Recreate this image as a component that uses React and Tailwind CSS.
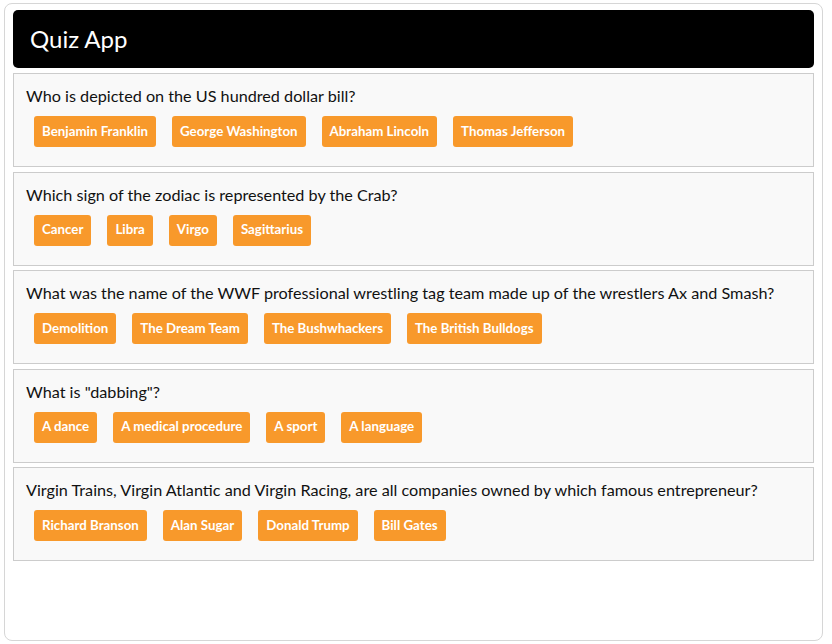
import React from "react";

const questions = [
  {
    q: "Who is depicted on the US hundred dollar bill?",
    a: ["Benjamin Franklin", "George Washington", "Abraham Lincoln", "Thomas Jefferson"],
  },
  {
    q: "Which sign of the zodiac is represented by the Crab?",
    a: ["Cancer", "Libra", "Virgo", "Sagittarius"],
  },
  {
    q: "What was the name of the WWF professional wrestling tag team made up of the wrestlers Ax and Smash?",
    a: ["Demolition", "The Dream Team", "The Bushwhackers", "The British Bulldogs"],
  },
  {
    q: 'What is "dabbing"?',
    a: ["A dance", "A medical procedure", "A sport", "A language"],
  },
  {
    q: "Virgin Trains, Virgin Atlantic and Virgin Racing, are all companies owned by which famous entrepreneur?",
    a: ["Richard Branson", "Alan Sugar", "Donald Trump", "Bill Gates"],
  },
];

function Question({ q, a }) {
  return (
    <div className="h-[94px] border border-[#cccccc] bg-[#f9f9f9] px-3 pt-[10px]">
      <p className="text-[16.2px] leading-[24px] text-[#111]">{q}</p>
      <div className="mt-[8px] flex">
        {a.map((ans) => (
          <button
            key={ans}
            className="mx-2 h-[31px] rounded-[3px] bg-[#f8992b] px-2 text-[13.3px] font-bold text-white"
          >
            {ans}
          </button>
        ))}
      </div>
    </div>
  );
}

export default function App() {
  return (
    <div className="min-h-[644px] bg-white pl-[4px] pt-[3px] font-['Lato',sans-serif]">
      <div className="h-[638px] w-[819px] rounded-lg border border-[#d6d6d6] px-2 pt-1.5">
        <div className="mb-[5px] flex h-[58px] items-center rounded-[5px] bg-black px-[17px]">
          <h1 className="text-[24px] font-normal text-white">Quiz App</h1>
        </div>
        <div className="flex flex-col gap-[4.5px]">
          {questions.map((item) => (
            <Question key={item.q} q={item.q} a={item.a} />
          ))}
        </div>
      </div>
    </div>
  );
}
